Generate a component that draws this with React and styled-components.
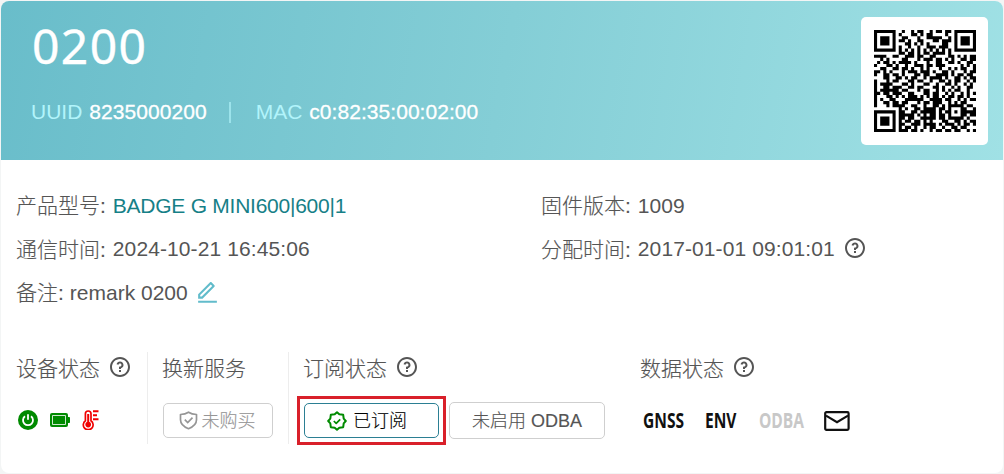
import React from 'react';
import styled, { createGlobalStyle } from 'styled-components';
import { RiQuestionLine, RiEditLine } from 'react-icons/ri';

// 33 x 33 modules, '#' is dark
const QR_ROWS = [
  '#######..#..#.##..#.##.##.#######',
  '#.....#.#...##.#.##....#..#.....#',
  '#.###.#..##...#..#####..#.#.###.#',
  '#.###.#.##.#..##...##.###.#.###.#',
  '#.###.#...##.#.#.#....##..#.###.#',
  '#.....#.#..#..#..###.###..#.....#',
  '#######.#.#.#.#.#.#.#.#.#.#######',
  '........##.##.#.##.####.#........',
  '####..##..###.##..##....##.#.#.##',
  '..#.#....##...#.###.##.#.#..##.##',
  '.#.##.#.####.#...#..##..##.#..##.',
  '#...##.#..#..###.##.###.....#.#.#',
  '..##..##.##.#..#.#...#..#.#.##..#',
  '##.#.#...#.###.###.#..##.#...#.##',
  '#..##.##.#...##.##..####.#.##.##.',
  '...##..##.#.##..#.####.#..##.#.##',
  '#...#.##...##.##..#..##.#.##..#.#',
  '#.####...##.#...##..#..##.#..#.#.',
  '#..##.###..##.##...##.#..#.#..##.',
  '#.######.##...#.##..#.#.#.##..#..',
  '##.##.###..##...##.##..#.#..#.#.#',
  '#...##.#.#.###.#.#.##.#.##.##.#..',
  '#.#..##...######..####.##..#.#.##',
  '#..##.##.##...#.##.###..#.#.##...',
  '#...#.####..##..#..##.#.#####.##.',
  '........#.#..##.####.##.#...##..#',
  '#######.##..##.#####.#.##.#.#####',
  '#.....#.#####.#.#.##.##.#...##.##',
  '#.###.#.##.##..#####.##.#####.#..',
  '#.###.#.#.##.##.#.#...##..##.#.##',
  '#.###.#.##..###.####.#.###.#.##.#',
  '#.....#.#.##.#..#.##..#..##.##...',
  '#######.###.##.#..#.##.##.##..#.#',
];

const qrPath = QR_ROWS.map((row, y) =>
  [...row].map((c, x) => (c === '#' ? `M${x} ${y}h1v1h-1z` : '')).join('')
).join('');

const QrCode = () => (
  <svg width="102" height="102" viewBox="0 0 33 33">
    <path d={qrPath} fill="#000" />
  </svg>
);

const PowerIcon = () => (
  <svg width="20" height="20" viewBox="0 0 20 20" fill="none">
    <circle cx="10" cy="10" r="10" fill="#008a00" />
    <path d="M7 6.2a5 5 0 1 0 6 0M10 4.2v5.6" stroke="#fff" strokeWidth="1.8" />
  </svg>
);

const BatteryIcon = () => (
  <svg width="20" height="14" viewBox="0 0 20 14">
    <rect width="18" height="14" rx="2" fill="#008a00" />
    <path d="M18 4h1.2a.8.8 0 0 1 .8.8v4.4a.8.8 0 0 1-.8.8H18z" fill="#008a00" />
    <rect x="2.6" y="2.6" width="12.8" height="8.8" fill="none" stroke="#fff" strokeWidth=".8" />
  </svg>
);

const TemperatureIcon = () => (
  <svg width="17" height="20" viewBox="0 0 17 20" fill="none" stroke="#f00000">
    <path d="M3.4 3.8a2.8 2.8 0 0 1 5.6 0v7a4.9 4.9 0 1 1-5.6 0z" strokeWidth="1.7" />
    <circle cx="6.2" cy="14.6" r="2.8" fill="#f00000" stroke="none" />
    <path d="M6.2 4v10" strokeWidth="2" />
    <path d="M11 1.2h5.5M11 5.2h4M11 9.2h5.5" strokeWidth="2" />
  </svg>
);

const ShieldIcon = () => (
  <svg width="19" height="19" viewBox="0 0 19 19" fill="none" stroke="currentColor" strokeWidth="1.7">
    <path d="M9.5 1.2C7.4 2.6 4.6 3.4 1.5 3.5v5.3c0 4.3 3 7 8 8.9 5-1.9 8-4.6 8-8.9V3.5c-3.1-.1-5.9-.9-8-2.3z" strokeLinejoin="round" />
    <path d="M5.8 8.6l2.9 2.9 4.8-4.8" />
  </svg>
);

const BadgeIcon = () => (
  <svg width="20" height="20" viewBox="0 0 20 20" fill="none" stroke="#008a00" strokeLinejoin="round">
    <path
      d="M10 1.2l2.3 2.1 3.9.5.5 3.9L18.8 10l-2.1 2.3-.5 3.9-3.9.5L10 18.8l-2.3-2.1-3.9-.5-.5-3.9L1.2 10l2.1-2.3.5-3.9 3.9-.5z"
      strokeWidth="2"
    />
    <path d="M6.8 10l2.4 2.3 4-4" strokeWidth="1.7" />
  </svg>
);

const MailIcon = () => (
  <svg width="26" height="20" viewBox="0 0 26 20" fill="none" stroke="#111" strokeWidth="2.2">
    <rect x="1.2" y="1.2" width="23.4" height="17.6" rx="1.2" />
    <path d="M2 4.6l11 6.6 11-6.6" />
  </svg>
);

const App = () => {
  return (
    <>
      <GlobalStyle />
      <Card>
        <Header>
          <div>
            <Title>0200</Title>
            <Ids>
              <span>UUID</span>
              <b>8235000200</b>
              <Bar />
              <span>MAC</span>
              <b>c0:82:35:00:02:00</b>
            </Ids>
          </div>
          <QrBox>
            <QrCode />
          </QrBox>
        </Header>

        <Info>
          <InfoItem>
            <Label>产品型号:</Label>
            <Model>BADGE G MINI600|600|1</Model>
          </InfoItem>
          <InfoItem>
            <Label>固件版本:</Label>
            <Value>1009</Value>
          </InfoItem>
          <InfoItem>
            <Label>通信时间:</Label>
            <Value $spacing="0.1px">2024-10-21 16:45:06</Value>
          </InfoItem>
          <InfoItem>
            <Label>分配时间:</Label>
            <Value $spacing="0.1px">2017-01-01 09:01:01</Value>
            <HelpIcon />
          </InfoItem>
          <InfoItem>
            <Label>备注:</Label>
            <Value $gap="6px">remark 0200</Value>
            <EditIcon />
          </InfoItem>
        </Info>

        <StatusBar>
          <Group $width="132px">
            <GroupTitle>
              <Label>设备状态</Label>
              <HelpIcon />
            </GroupTitle>
            <GroupBody $gap="12px" $indent="2px">
              <DeviceIcons>
                <PowerIcon />
                <BatteryIcon />
                <TemperatureIcon />
              </DeviceIcons>
            </GroupBody>
          </Group>
          <Group $width="141px" $pad="14px">
            <GroupTitle>
              <Label>换新服务</Label>
            </GroupTitle>
            <GroupBody $indent="1px">
              <StateButton $width="110px" $color="#969696" $border="#cfcfcf" $trail="2px">
                <ShieldIcon />
                <Label>未购买</Label>
              </StateButton>
            </GroupBody>
          </Group>
          <Group $width="351px" $pad="14px" $last>
            <GroupTitle>
              <Label>订阅状态</Label>
              <HelpIcon />
            </GroupTitle>
            <GroupBody $gap="10px" $indent="1px">
              <Marked>
                <StateButton $width="135px" $color="#000" $border="#2b7f93" $trail="9px" $gap="6px">
                  <BadgeIcon />
                  <Label>已订阅</Label>
                </StateButton>
              </Marked>
              <StateButton $width="156px" $tall $color="#555" $border="#cfcfcf">
                <Label>未启用 ODBA</Label>
              </StateButton>
            </GroupBody>
          </Group>
          <Group $last>
            <GroupTitle>
              <Label>数据状态</Label>
              <HelpIcon />
            </GroupTitle>
            <GroupBody $indent="3px">
              <Tag $width="62px">
                <span>GNSS</span>
              </Tag>
              <Tag $width="54px">
                <span>ENV</span>
              </Tag>
              <Tag $width="65px" $off>
                <span>ODBA</span>
              </Tag>
              <MailIcon />
            </GroupBody>
          </Group>
        </StatusBar>
      </Card>
    </>
  );
};

export default App;

const GlobalStyle = createGlobalStyle`
  * {
    box-sizing: border-box;
  }
  body {
    margin: 0;
    background-color: #f3f5f5;
    font-family: "Liberation Sans", "Noto Sans CJK SC", sans-serif;
    font-weight: 300;
    color: #555555;
  }
`;

const Card = styled.div`
  width: 1002px;
  height: 472px;
  margin: 1px;
  border-radius: 8px;
  background-color: #ffffff;
  overflow: hidden;
`;

const Header = styled.div`
  display: flex;
  justify-content: space-between;
  height: 159px;
  padding: 16px 15px 0 30px;
  background: linear-gradient(100deg, #69bdca 0%, #84ced6 50%, #a0e1e5 100%);
`;

const Title = styled.div`
  height: 60px;
  padding-left: 1px;
  font: 400 48px/58px "Noto Sans", sans-serif;
  letter-spacing: 1.4px;
  color: #ffffff;
  -webkit-text-stroke: 0.4px #ffffff;
`;

const Ids = styled.div`
  display: flex;
  align-items: center;
  height: 30px;
  margin-top: 20px;
  font-size: 21px;
  color: #b2f4fb;
  b {
    margin-left: 7px;
    font-weight: 400;
    letter-spacing: 0.05px;
    color: #ffffff;
    -webkit-text-stroke: 0.3px #ffffff;
  }
`;

const Bar = styled.i`
  width: 2px;
  height: 21px;
  margin: 0 25px 0 22px;
  background-color: #9ce3eb;
`;

const QrBox = styled.div`
  display: flex;
  align-items: center;
  justify-content: center;
  width: 127px;
  height: 128px;
  border-radius: 5px;
  background-color: #ffffff;
`;

const Info = styled.div`
  display: grid;
  grid-template-columns: 525px 1fr;
  grid-auto-rows: 43.5px;
  padding: 24px 0 0 15px;
`;

const InfoItem = styled.div`
  display: flex;
  align-items: center;
  font-size: 21px;
  white-space: nowrap;
`;

const Label = styled.span`
  margin-top: -3px;
  -webkit-text-stroke: 0.15px currentColor;
`;

const Value = styled.span`
  margin-left: ${({ $gap }) => $gap || '7px'};
  letter-spacing: ${({ $spacing }) => $spacing || 0};
`;

const Model = styled(Value)`
  letter-spacing: -0.25px;
  color: #168087;
`;

const HelpIcon = styled(RiQuestionLine)`
  width: 24px;
  height: 24px;
  margin-left: 8px;
  margin-top: -3px;
`;

const EditIcon = styled(RiEditLine)`
  width: 25px;
  height: 25px;
  margin-left: 7px;
  color: #62bccb;
`;

const StatusBar = styled.div`
  display: flex;
  padding: 37px 0 0 15px;
`;

const Group = styled.div`
  width: ${({ $width }) => $width || 'auto'};
  height: 92px;
  padding-left: ${({ $pad }) => $pad || 0};
  border-right: ${({ $last }) => ($last ? 'none' : '1px solid #ededed')};
  white-space: nowrap;
`;

const GroupTitle = styled.div`
  display: flex;
  align-items: center;
  height: 34px;
  font-size: 21px;
`;

const GroupBody = styled.div`
  display: flex;
  align-items: center;
  gap: ${({ $gap }) => $gap || 0};
  height: 36px;
  margin-top: 17px;
  padding-left: ${({ $indent }) => $indent || 0};
`;

const DeviceIcons = styled.div`
  display: flex;
  align-items: center;
  gap: 12px;
  padding-bottom: 2px;
`;

const StateButton = styled.div`
  display: flex;
  align-items: center;
  justify-content: center;
  gap: ${({ $gap }) => $gap || '4px'};
  width: ${({ $width }) => $width};
  height: ${({ $tall }) => ($tall ? '37px' : '35px')};
  padding-right: ${({ $trail }) => $trail || 0};
  border: 1px solid ${({ $border }) => $border};
  border-radius: 5px;
  font-size: 18px;
  color: ${({ $color }) => $color};
`;

const Marked = styled.div`
  outline: 3px solid #d9202a;
  outline-offset: 4px;
`;

const Tag = styled.div`
  width: ${({ $width }) => $width};
  span {
    display: inline-block;
    padding-bottom: 2px;
    font: 700 21px/28px "Open Sans", sans-serif;
    color: ${({ $off }) => ($off ? '#c8c8c8' : '#111111')};
    transform: scaleX(0.74);
    transform-origin: left;
  }
`;
